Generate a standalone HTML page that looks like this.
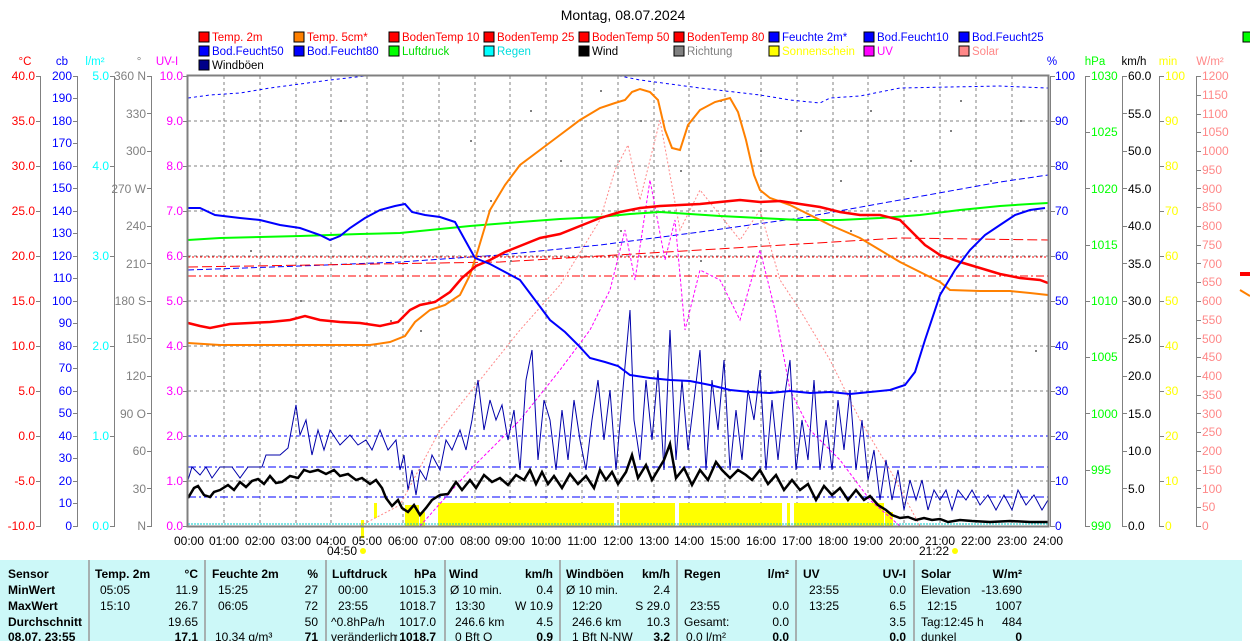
<!DOCTYPE html>
<html><head><meta charset="utf-8"><style>
html,body{margin:0;padding:0;background:#fff;width:1250px;height:641px;overflow:hidden}
svg{display:block;font-family:"Liberation Sans",sans-serif;font-size:12px}
.tb{font-weight:bold}
</style></head><body>
<svg width="1250" height="641" viewBox="0 0 1250 641" xmlns="http://www.w3.org/2000/svg">
<text x="623" y="20" text-anchor="middle" font-size="14">Montag, 08.07.2024</text>
<g font-size="11.5">
<rect x="199" y="32" width="10" height="10" fill="#f00" stroke="#000"/><text x="212" y="41" fill="#f00">Temp. 2m</text>
<rect x="294" y="32" width="10" height="10" fill="#ff8000" stroke="#000"/><text x="307" y="41" fill="#f00">Temp. 5cm*</text>
<rect x="389" y="32" width="10" height="10" fill="#f00" stroke="#000"/><text x="402" y="41" fill="#f00">BodenTemp 10</text>
<rect x="484" y="32" width="10" height="10" fill="#f00" stroke="#000"/><text x="497" y="41" fill="#f00">BodenTemp 25</text>
<rect x="579" y="32" width="10" height="10" fill="#f00" stroke="#000"/><text x="592" y="41" fill="#f00">BodenTemp 50</text>
<rect x="674" y="32" width="10" height="10" fill="#f00" stroke="#000"/><text x="687" y="41" fill="#f00">BodenTemp 80</text>
<rect x="769" y="32" width="10" height="10" fill="#00f" stroke="#000"/><text x="782" y="41" fill="#00f">Feuchte 2m*</text>
<rect x="864" y="32" width="10" height="10" fill="#00f" stroke="#000"/><text x="877" y="41" fill="#00f">Bod.Feucht10</text>
<rect x="959" y="32" width="10" height="10" fill="#00f" stroke="#000"/><text x="972" y="41" fill="#00f">Bod.Feucht25</text>
<rect x="1243" y="32" width="10" height="10" fill="#0f0" stroke="#000"/>
<rect x="199" y="46" width="10" height="10" fill="#00f" stroke="#000"/><text x="212" y="55" fill="#00f">Bod.Feucht50</text>
<rect x="294" y="46" width="10" height="10" fill="#00f" stroke="#000"/><text x="307" y="55" fill="#00f">Bod.Feucht80</text>
<rect x="389" y="46" width="10" height="10" fill="#0f0" stroke="#000"/><text x="402" y="55" fill="#0d0">Luftdruck</text>
<rect x="484" y="46" width="10" height="10" fill="#0ff" stroke="#000"/><text x="497" y="55" fill="#0dd">Regen</text>
<rect x="579" y="46" width="10" height="10" fill="#000" stroke="#000"/><text x="592" y="55">Wind</text>
<rect x="674" y="46" width="10" height="10" fill="#808080" stroke="#000"/><text x="687" y="55" fill="#808080">Richtung</text>
<rect x="769" y="46" width="10" height="10" fill="#ff0" stroke="#000"/><text x="782" y="55" fill="#ff0">Sonnenschein</text>
<rect x="864" y="46" width="10" height="10" fill="#f0f" stroke="#000"/><text x="877" y="55" fill="#f0f">UV</text>
<rect x="959" y="46" width="10" height="10" fill="#f88" stroke="#000"/><text x="972" y="55" fill="#f88">Solar</text>
<rect x="199" y="60" width="10" height="10" fill="#008" stroke="#000"/><text x="212" y="69">Windböen</text>
</g>
<g font-size="11.5">
<text x="25" y="65" fill="#f00" text-anchor="middle">°C</text>
<text x="62" y="65" fill="#00f" text-anchor="middle">cb</text>
<text x="95" y="65" fill="#0ff" text-anchor="middle">l/m²</text>
<text x="139" y="65" fill="#808080" text-anchor="middle">°</text>
<text x="167" y="65" fill="#f0f" text-anchor="middle">UV-I</text>
<text x="1052" y="65" fill="#00f" text-anchor="middle">%</text>
<text x="1095" y="65" fill="#0f0" text-anchor="middle">hPa</text>
<text x="1134" y="65" fill="#000" text-anchor="middle">km/h</text>
<text x="1168" y="65" fill="#ff0" text-anchor="middle">min</text>
<text x="1210" y="65" fill="#f88" text-anchor="middle">W/m²</text>
</g>
<g stroke="#808080" stroke-width="1" fill="none">
<line x1="40.5" y1="76" x2="40.5" y2="526"/>
<line x1="77.5" y1="76" x2="77.5" y2="526"/>
<line x1="114.5" y1="76" x2="114.5" y2="526"/>
<line x1="151.5" y1="76" x2="151.5" y2="526"/>
<line x1="1085.5" y1="76" x2="1085.5" y2="526"/>
<line x1="1122.5" y1="76" x2="1122.5" y2="526"/>
<line x1="1159.5" y1="76" x2="1159.5" y2="526"/>
<line x1="1196.5" y1="76" x2="1196.5" y2="526"/>
<!-- ticks -->
<path d="M36 76.5h5M36 121.5h5M36 166.5h5M36 211.5h5M36 256.5h5M36 301.5h5M36 346.5h5M36 391.5h5M36 436.5h5M36 481.5h5M36 526.5h5"/>
<path d="M73 76.5h5M73 98.5h5M73 121.5h5M73 143.5h5M73 166.5h5M73 188.5h5M73 211.5h5M73 233.5h5M73 256.5h5M73 278.5h5M73 301.5h5M73 323.5h5M73 346.5h5M73 368.5h5M73 391.5h5M73 413.5h5M73 436.5h5M73 458.5h5M73 481.5h5M73 503.5h5M73 526.5h5"/>
<path d="M110 76.5h5M110 166.5h5M110 256.5h5M110 346.5h5M110 436.5h5M110 526.5h5"/>
<path d="M147 76.5h5M147 113.5h5M147 151.5h5M147 188.5h5M147 226.5h5M147 263.5h5M147 301.5h5M147 338.5h5M147 376.5h5M147 413.5h5M147 451.5h5M147 488.5h5M147 526.5h5"/>
<path d="M183 76.5h5M183 121.5h5M183 166.5h5M183 211.5h5M183 256.5h5M183 301.5h5M183 346.5h5M183 391.5h5M183 436.5h5M183 481.5h5M183 526.5h5"/>
<path d="M1050 76.5h5M1050 121.5h5M1050 166.5h5M1050 211.5h5M1050 256.5h5M1050 301.5h5M1050 346.5h5M1050 391.5h5M1050 436.5h5M1050 481.5h5M1050 526.5h5"/>
<path d="M1085 76.5h5M1085 132.5h5M1085 188.5h5M1085 245.5h5M1085 301.5h5M1085 357.5h5M1085 413.5h5M1085 470.5h5M1085 526.5h5"/>
<path d="M1122 76.5h5M1122 113.5h5M1122 151.5h5M1122 188.5h5M1122 226.5h5M1122 263.5h5M1122 301.5h5M1122 338.5h5M1122 376.5h5M1122 413.5h5M1122 451.5h5M1122 488.5h5M1122 526.5h5"/>
<path d="M1159 76.5h5M1159 121.5h5M1159 166.5h5M1159 211.5h5M1159 256.5h5M1159 301.5h5M1159 346.5h5M1159 391.5h5M1159 436.5h5M1159 481.5h5M1159 526.5h5"/>
<path d="M1196 76.5h5M1196 95.5h5M1196 114.5h5M1196 132.5h5M1196 151.5h5M1196 170.5h5M1196 188.5h5M1196 207.5h5M1196 226.5h5M1196 245.5h5M1196 263.5h5M1196 282.5h5M1196 301.5h5M1196 320.5h5M1196 338.5h5M1196 357.5h5M1196 376.5h5M1196 395.5h5M1196 413.5h5M1196 432.5h5M1196 451.5h5M1196 470.5h5M1196 488.5h5M1196 507.5h5M1196 526.5h5"/>
</g>
<g font-size="12" text-anchor="end">
<g fill="#f00">
<text x="35" y="80">40.0</text><text x="35" y="125">35.0</text><text x="35" y="170">30.0</text><text x="35" y="215">25.0</text><text x="35" y="260">20.0</text><text x="35" y="305">15.0</text><text x="35" y="350">10.0</text><text x="35" y="395">5.0</text><text x="35" y="440">0.0</text><text x="35" y="485">-5.0</text><text x="35" y="530">-10.0</text>
</g>
<g fill="#00f">
<text x="72" y="80">200</text><text x="72" y="102">190</text><text x="72" y="125">180</text><text x="72" y="147">170</text><text x="72" y="170">160</text><text x="72" y="192">150</text><text x="72" y="215">140</text><text x="72" y="237">130</text><text x="72" y="260">120</text><text x="72" y="282">110</text><text x="72" y="305">100</text><text x="72" y="327">90</text><text x="72" y="350">80</text><text x="72" y="372">70</text><text x="72" y="395">60</text><text x="72" y="417">50</text><text x="72" y="440">40</text><text x="72" y="462">30</text><text x="72" y="485">20</text><text x="72" y="507">10</text><text x="72" y="530">0</text>
</g>
<g fill="#0ff">
<text x="109" y="80">5.0</text><text x="109" y="170">4.0</text><text x="109" y="260">3.0</text><text x="109" y="350">2.0</text><text x="109" y="440">1.0</text><text x="109" y="530">0.0</text>
</g>
<g fill="#808080">
<text x="146" y="80">360 N</text><text x="146" y="118">330</text><text x="146" y="155">300</text><text x="146" y="193">270 W</text><text x="146" y="230">240</text><text x="146" y="268">210</text><text x="146" y="305">180 S</text><text x="146" y="343">150</text><text x="146" y="380">120</text><text x="146" y="418">90 O</text><text x="146" y="455">60</text><text x="146" y="493">30</text><text x="146" y="530">N</text>
</g>
<g fill="#f0f">
<text x="183" y="80">10.0</text><text x="183" y="125">9.0</text><text x="183" y="170">8.0</text><text x="183" y="215">7.0</text><text x="183" y="260">6.0</text><text x="183" y="305">5.0</text><text x="183" y="350">4.0</text><text x="183" y="395">3.0</text><text x="183" y="440">2.0</text><text x="183" y="485">1.0</text><text x="183" y="530">0.0</text>
</g>
</g>
<g font-size="12">
<g fill="#00f">
<text x="1055" y="80">100</text><text x="1055" y="125">90</text><text x="1055" y="170">80</text><text x="1055" y="215">70</text><text x="1055" y="260">60</text><text x="1055" y="305">50</text><text x="1055" y="350">40</text><text x="1055" y="395">30</text><text x="1055" y="440">20</text><text x="1055" y="485">10</text><text x="1055" y="530">0</text>
</g>
<g fill="#0f0">
<text x="1091" y="80">1030</text><text x="1091" y="136">1025</text><text x="1091" y="193">1020</text><text x="1091" y="249">1015</text><text x="1091" y="305">1010</text><text x="1091" y="361">1005</text><text x="1091" y="418">1000</text><text x="1091" y="474">995</text><text x="1091" y="530">990</text>
</g>
<g fill="#000">
<text x="1128" y="80">60.0</text><text x="1128" y="118">55.0</text><text x="1128" y="155">50.0</text><text x="1128" y="193">45.0</text><text x="1128" y="230">40.0</text><text x="1128" y="268">35.0</text><text x="1128" y="305">30.0</text><text x="1128" y="343">25.0</text><text x="1128" y="380">20.0</text><text x="1128" y="418">15.0</text><text x="1128" y="455">10.0</text><text x="1128" y="493">5.0</text><text x="1128" y="530">0.0</text>
</g>
<g fill="#ff0">
<text x="1165" y="80">100</text><text x="1165" y="125">90</text><text x="1165" y="170">80</text><text x="1165" y="215">70</text><text x="1165" y="260">60</text><text x="1165" y="305">50</text><text x="1165" y="350">40</text><text x="1165" y="395">30</text><text x="1165" y="440">20</text><text x="1165" y="485">10</text><text x="1165" y="530">0</text>
</g>
<g fill="#f88">
<text x="1202" y="80">1200</text><text x="1202" y="99">1150</text><text x="1202" y="118">1100</text><text x="1202" y="136">1050</text><text x="1202" y="155">1000</text><text x="1202" y="174">950</text><text x="1202" y="193">900</text><text x="1202" y="211">850</text><text x="1202" y="230">800</text><text x="1202" y="249">750</text><text x="1202" y="268">700</text><text x="1202" y="286">650</text><text x="1202" y="305">600</text><text x="1202" y="324">550</text><text x="1202" y="343">500</text><text x="1202" y="361">450</text><text x="1202" y="380">400</text><text x="1202" y="399">350</text><text x="1202" y="418">300</text><text x="1202" y="436">250</text><text x="1202" y="455">200</text><text x="1202" y="474">150</text><text x="1202" y="493">100</text><text x="1202" y="511">50</text><text x="1202" y="530">0</text>
</g>
</g>
<g stroke="#808080" stroke-dasharray="3,3">
<line x1="224" y1="76" x2="224" y2="526"/><line x1="260" y1="76" x2="260" y2="526"/><line x1="296" y1="76" x2="296" y2="526"/><line x1="331" y1="76" x2="331" y2="526"/><line x1="367" y1="76" x2="367" y2="526"/><line x1="403" y1="76" x2="403" y2="526"/><line x1="439" y1="76" x2="439" y2="526"/><line x1="475" y1="76" x2="475" y2="526"/><line x1="510" y1="76" x2="510" y2="526"/><line x1="546" y1="76" x2="546" y2="526"/><line x1="582" y1="76" x2="582" y2="526"/><line x1="618" y1="76" x2="618" y2="526"/><line x1="654" y1="76" x2="654" y2="526"/><line x1="689" y1="76" x2="689" y2="526"/><line x1="725" y1="76" x2="725" y2="526"/><line x1="761" y1="76" x2="761" y2="526"/><line x1="797" y1="76" x2="797" y2="526"/><line x1="833" y1="76" x2="833" y2="526"/><line x1="868" y1="76" x2="868" y2="526"/><line x1="904" y1="76" x2="904" y2="526"/><line x1="940" y1="76" x2="940" y2="526"/><line x1="976" y1="76" x2="976" y2="526"/><line x1="1012" y1="76" x2="1012" y2="526"/>
<line x1="188" y1="121" x2="1048" y2="121"/><line x1="188" y1="166" x2="1048" y2="166"/><line x1="188" y1="211" x2="1048" y2="211"/><line x1="188" y1="256" x2="1048" y2="256"/><line x1="188" y1="301" x2="1048" y2="301"/><line x1="188" y1="346" x2="1048" y2="346"/><line x1="188" y1="391" x2="1048" y2="391"/><line x1="188" y1="436" x2="1048" y2="436"/><line x1="188" y1="481" x2="1048" y2="481"/>
</g>
<g fill="#ff0">
<rect x="405" y="505" width="14" height="21"/><rect x="420" y="512" width="5" height="14"/><rect x="438" y="503" width="176" height="23"/><rect x="620" y="503" width="55" height="23"/><rect x="679" y="503" width="103" height="23"/><rect x="787" y="503" width="3" height="23"/><rect x="794" y="503" width="90" height="23"/><rect x="885" y="512" width="8" height="14"/>
<rect x="374" y="503" width="3" height="15"/><rect x="361" y="520" width="3" height="18"/>
</g>
<g fill="none" stroke-width="1">
<path d="M188 98 L210 95 L240 93 L270 88 L300 84 L330 80 L365 76 L620 76 L640 80 L700 88 L760 95 L790 100 L820 103 L830 98 L860 96 L900 88 L1000 86 L1048 88" stroke="#00f" stroke-dasharray="3,3"/>
<path d="M188 270 L300 266 L400 262 L500 255 L600 245 L700 232 L800 218 L900 200 L1000 182 L1048 175" stroke="#00f" stroke-dasharray="6,3"/>
<path d="M188 276 L1048 276" stroke="#f00" stroke-dasharray="8,3,2,3"/>
<path d="M188 267 L500 262 L700 250 L900 238 L1048 240" stroke="#f00" stroke-dasharray="10,4"/>
<path d="M188 257 L1048 257" stroke="#f00" stroke-dasharray="2,2"/>
<path d="M188 436 L1048 436" stroke="#00f" stroke-dasharray="3,3"/>
<path d="M188 467 L1048 467" stroke="#00f" stroke-dasharray="8,3,2,3"/>
<path d="M188 497 L1048 497" stroke="#00f" stroke-dasharray="8,3,2,3"/>
<path d="M188 524 L1048 524" stroke="#0cc" stroke-dasharray="2,1"/>
<path d="M360 526 L400 505 L440 430 L480 380 L520 330 L560 285 L600 220 L615 170 L628 145 L640 200 L660 120 L680 230 L700 190 L720 215 L740 240 L760 210 L780 280 L800 310 L830 360 L860 420 L890 470 L920 526" stroke="#f88" stroke-dasharray="2,2"/>
<path d="M420 526 L470 470 L520 420 L560 370 L590 330 L610 290 L625 230 L635 280 L650 180 L665 260 L675 220 L685 330 L700 270 L720 280 L740 320 L760 250 L775 310 L790 390 L810 430 L840 460 L870 500 L900 526" stroke="#f0f" stroke-dasharray="3,2"/>
</g>
<g fill="#808080">
<rect x="340" y="120" width="2" height="2"/><rect x="420" y="330" width="2" height="2"/><rect x="450" y="290" width="2" height="2"/><rect x="470" y="140" width="2" height="2"/><rect x="490" y="200" width="2" height="2"/><rect x="530" y="110" width="2" height="2"/><rect x="560" y="160" width="2" height="2"/><rect x="600" y="90" width="2" height="2"/><rect x="640" y="120" width="2" height="2"/><rect x="680" y="170" width="2" height="2"/><rect x="720" y="100" width="2" height="2"/><rect x="760" y="150" width="2" height="2"/><rect x="800" y="130" width="2" height="2"/><rect x="840" y="180" width="2" height="2"/><rect x="870" y="110" width="2" height="2"/><rect x="910" y="160" width="2" height="2"/><rect x="950" y="130" width="2" height="2"/><rect x="990" y="180" width="2" height="2"/><rect x="1020" y="120" width="2" height="2"/><rect x="250" y="250" width="2" height="2"/><rect x="300" y="300" width="2" height="2"/><rect x="390" y="320" width="2" height="2"/><rect x="510" y="260" width="2" height="2"/><rect x="620" y="230" width="2" height="2"/><rect x="700" y="260" width="2" height="2"/><rect x="850" y="230" width="2" height="2"/><rect x="960" y="100" width="2" height="2"/><rect x="1035" y="350" width="2" height="2"/>
</g>
<polyline fill="none" stroke="#00a" stroke-width="1" points="188,480 192,467 200,475 206,467 212,478 220,467 232,467 240,478 248,467 262,467 266,455 280,455 288,448 296,405 300,435 306,420 312,455 318,430 324,450 330,430 340,445 350,435 358,445 366,440 372,450 380,430 388,450 396,440 400,470 404,455 408,490 412,470 416,495 420,470 426,480 432,455 440,470 446,440 452,450 460,430 466,450 472,420 478,380 484,430 490,400 496,420 502,405 508,440 514,410 520,470 526,380 532,350 538,460 544,400 550,420 556,470 562,410 568,460 574,400 580,440 586,470 592,420 598,380 604,440 610,390 616,470 622,400 630,310 634,420 640,460 646,380 652,440 658,370 664,470 670,330 676,460 682,380 688,450 694,400 700,350 706,470 712,380 718,430 724,360 730,470 736,410 742,460 748,390 754,420 760,370 766,470 772,400 778,460 784,400 790,360 796,470 802,420 808,460 814,380 820,470 826,420 832,470 838,400 844,450 850,390 856,470 862,420 868,480 874,450 880,500 886,460 892,500 898,470 904,510 910,480 916,500 922,480 928,510 934,490 940,500 946,490 952,510 958,490 966,500 972,490 980,505 988,495 996,510 1004,495 1012,510 1018,490 1026,505 1034,495 1042,510 1048,500"/>
<polyline fill="none" stroke="#000" stroke-width="2.5" points="188,498 194,488 198,486 204,495 210,497 214,492 220,490 228,485 234,490 240,482 246,487 252,481 258,479 264,484 270,476 276,483 282,482 290,476 298,478 304,470 310,472 318,470 326,474 334,470 340,476 348,474 356,480 362,478 370,484 376,480 382,488 386,498 392,506 398,500 402,508 408,512 414,505 420,515 426,508 432,500 440,495 448,494 456,482 462,490 470,480 476,488 484,475 492,482 500,478 508,485 516,475 524,480 530,470 536,484 542,472 548,484 554,476 562,488 570,474 578,484 586,476 594,488 600,470 606,480 612,472 618,484 626,472 632,455 638,478 646,465 652,480 658,470 664,460 670,444 676,478 684,468 692,485 700,470 708,480 716,462 722,470 730,478 738,470 746,475 752,480 760,470 768,484 776,475 784,490 792,480 800,490 808,484 816,500 824,486 832,495 840,488 848,500 856,490 864,500 870,496 878,505 886,510 892,515 900,518 908,517 916,520 924,518 932,520 940,519 948,522 960,520 972,521 990,522 1010,521 1030,522 1048,522"/>
<polyline fill="none" stroke="#0f0" stroke-width="2" points="188,240 220,238 260,237 300,236 330,235 360,234 400,233 430,230 470,226 520,222 560,219 600,217 630,214 660,212 690,214 720,216 760,218 800,220 840,220 880,218 920,215 960,210 1000,206 1030,204 1048,203"/>
<polyline fill="none" stroke="#ff8000" stroke-width="2" points="188,343 220,345 260,345 300,345 340,345 370,345 390,342 405,336 415,322 430,310 445,305 460,295 470,275 478,250 490,210 505,185 520,165 540,150 560,135 580,120 600,108 615,103 625,100 632,92 640,89 650,92 658,100 665,130 672,148 680,150 688,125 700,110 715,102 730,98 738,112 746,140 754,175 760,190 770,198 790,205 810,215 830,225 860,238 880,250 900,262 920,272 940,282 950,290 980,291 1010,291 1030,293 1048,295"/>
<polyline fill="none" stroke="#f00" stroke-width="2.5" points="188,323 200,326 210,328 230,324 250,323 270,322 290,320 305,316 320,320 340,322 360,323 380,326 398,322 410,310 420,305 435,302 450,292 462,278 476,266 490,260 505,252 520,246 540,238 560,234 580,226 600,218 620,212 640,208 660,206 680,205 700,204 720,202 740,200 760,202 780,201 800,204 820,207 840,212 860,215 880,215 900,220 912,232 925,245 940,255 960,262 980,268 1000,274 1020,278 1040,280 1048,283"/>
<polyline fill="none" stroke="#00f" stroke-width="2" points="188,208 200,208 215,215 240,218 260,220 280,225 300,228 320,235 330,240 340,236 350,228 365,218 380,210 395,206 405,204 412,212 425,215 440,217 455,222 465,240 475,258 490,264 505,272 520,280 535,300 550,320 565,332 578,345 590,358 605,362 618,366 630,375 650,378 670,380 690,381 710,385 730,390 750,392 770,393 790,391 810,393 830,392 850,394 870,392 890,390 905,385 915,372 925,340 940,295 955,270 970,250 985,235 1000,225 1015,215 1030,210 1045,208"/>
<rect x="187.5" y="75.5" width="861" height="451" fill="none" stroke="#808080" stroke-width="2"/>
<line x1="1050.5" y1="76" x2="1050.5" y2="526" stroke="#808080"/>
<g font-size="12" text-anchor="middle">
<text x="189" y="545">00:00</text><text x="224" y="545">01:00</text><text x="260" y="545">02:00</text><text x="296" y="545">03:00</text><text x="331" y="545">04:00</text><text x="367" y="545">05:00</text><text x="403" y="545">06:00</text><text x="439" y="545">07:00</text><text x="475" y="545">08:00</text><text x="510" y="545">09:00</text><text x="546" y="545">10:00</text><text x="582" y="545">11:00</text><text x="618" y="545">12:00</text><text x="654" y="545">13:00</text><text x="689" y="545">14:00</text><text x="725" y="545">15:00</text><text x="761" y="545">16:00</text><text x="797" y="545">17:00</text><text x="833" y="545">18:00</text><text x="868" y="545">19:00</text><text x="904" y="545">20:00</text><text x="940" y="545">21:00</text><text x="976" y="545">22:00</text><text x="1012" y="545">23:00</text><text x="1048" y="545">24:00</text>
<text x="342" y="555">04:50</text><text x="934" y="555">21:22</text>
</g>
<circle cx="363" cy="551" r="3" fill="#ff0"/><circle cx="955" cy="551" r="3" fill="#ff0"/>
<rect x="1240" y="272" width="10" height="4" fill="#f00"/><path d="M1240 290 L1250 296" stroke="#ff8000" stroke-width="2"/>
<rect x="0" y="560" width="1242" height="81" fill="#ccf8f8"/>
<g stroke="#999" stroke-width="1.5">
<line x1="89" y1="560" x2="89" y2="641"/><line x1="205" y1="560" x2="205" y2="641"/><line x1="326" y1="560" x2="326" y2="641"/><line x1="445" y1="560" x2="445" y2="641"/><line x1="560" y1="560" x2="560" y2="641"/><line x1="677" y1="560" x2="677" y2="641"/><line x1="796" y1="560" x2="796" y2="641"/><line x1="914" y1="560" x2="914" y2="641"/>
</g>
<g font-size="12">
<g class="tb">
<text x="8" y="578">Sensor</text><text x="8" y="610">MaxWert</text><text x="8" y="594">MinWert</text><text x="8" y="626">Durchschnitt</text><text x="8" y="641">08.07. 23:55</text>
<text x="95" y="578">Temp. 2m</text><text x="198" y="578" text-anchor="end">°C</text>
<text x="212" y="578">Feuchte 2m</text><text x="318" y="578" text-anchor="end">%</text>
<text x="332" y="578">Luftdruck</text><text x="436" y="578" text-anchor="end">hPa</text>
<text x="449" y="578">Wind</text><text x="553" y="578" text-anchor="end">km/h</text>
<text x="566" y="578">Windböen</text><text x="670" y="578" text-anchor="end">km/h</text>
<text x="684" y="578">Regen</text><text x="789" y="578" text-anchor="end">l/m²</text>
<text x="803" y="578">UV</text><text x="906" y="578" text-anchor="end">UV-I</text>
<text x="921" y="578">Solar</text><text x="1022" y="578" text-anchor="end">W/m²</text>
</g>
<text x="100" y="594">05:05</text><text x="198" y="594" text-anchor="end">11.9</text>
<text x="100" y="610">15:10</text><text x="198" y="610" text-anchor="end">26.7</text>
<text x="198" y="626" text-anchor="end">19.65</text>
<text x="198" y="641" text-anchor="end" class="tb">17.1</text>
<text x="218" y="594">15:25</text><text x="318" y="594" text-anchor="end">27</text>
<text x="218" y="610">06:05</text><text x="318" y="610" text-anchor="end">72</text>
<text x="318" y="626" text-anchor="end">50</text>
<text x="215" y="641">10.34 g/m³</text><text x="318" y="641" text-anchor="end" class="tb">71</text>
<text x="338" y="594">00:00</text><text x="436" y="594" text-anchor="end">1015.3</text>
<text x="338" y="610">23:55</text><text x="436" y="610" text-anchor="end">1018.7</text>
<text x="331" y="626">^0.8hPa/h</text><text x="436" y="626" text-anchor="end">1017.0</text>
<text x="331" y="641">veränderlich</text><text x="436" y="641" text-anchor="end" class="tb">↑1018.7</text>
<text x="450" y="594">Ø 10 min.</text><text x="553" y="594" text-anchor="end">0.4</text>
<text x="455" y="610">13:30</text><text x="553" y="610" text-anchor="end">W 10.9</text>
<text x="455" y="626">246.6 km</text><text x="553" y="626" text-anchor="end">4.5</text>
<text x="455" y="641">0 Bft O</text><text x="553" y="641" text-anchor="end" class="tb">0.9</text>
<text x="566" y="594">Ø 10 min.</text><text x="670" y="594" text-anchor="end">2.4</text>
<text x="572" y="610">12:20</text><text x="670" y="610" text-anchor="end">S 29.0</text>
<text x="572" y="626">246.6 km</text><text x="670" y="626" text-anchor="end">10.3</text>
<text x="572" y="641">1 Bft N-NW</text><text x="670" y="641" text-anchor="end" class="tb">3.2</text>
<text x="690" y="610">23:55</text><text x="789" y="610" text-anchor="end">0.0</text>
<text x="684" y="626">Gesamt:</text><text x="789" y="626" text-anchor="end">0.0</text>
<text x="686" y="641">0.0 l/m²</text><text x="789" y="641" text-anchor="end" class="tb">0.0</text>
<text x="809" y="594">23:55</text><text x="906" y="594" text-anchor="end">0.0</text>
<text x="809" y="610">13:25</text><text x="906" y="610" text-anchor="end">6.5</text>
<text x="906" y="626" text-anchor="end">3.5</text>
<text x="906" y="641" text-anchor="end" class="tb">0.0</text>
<text x="921" y="594">Elevation</text><text x="1022" y="594" text-anchor="end">-13.690</text>
<text x="927" y="610">12:15</text><text x="1022" y="610" text-anchor="end">1007</text>
<text x="921" y="626">Tag:12:45 h</text><text x="1022" y="626" text-anchor="end">484</text>
<text x="921" y="641">dunkel</text><text x="1022" y="641" text-anchor="end" class="tb">0</text>
</g>
</svg>
</body></html>
